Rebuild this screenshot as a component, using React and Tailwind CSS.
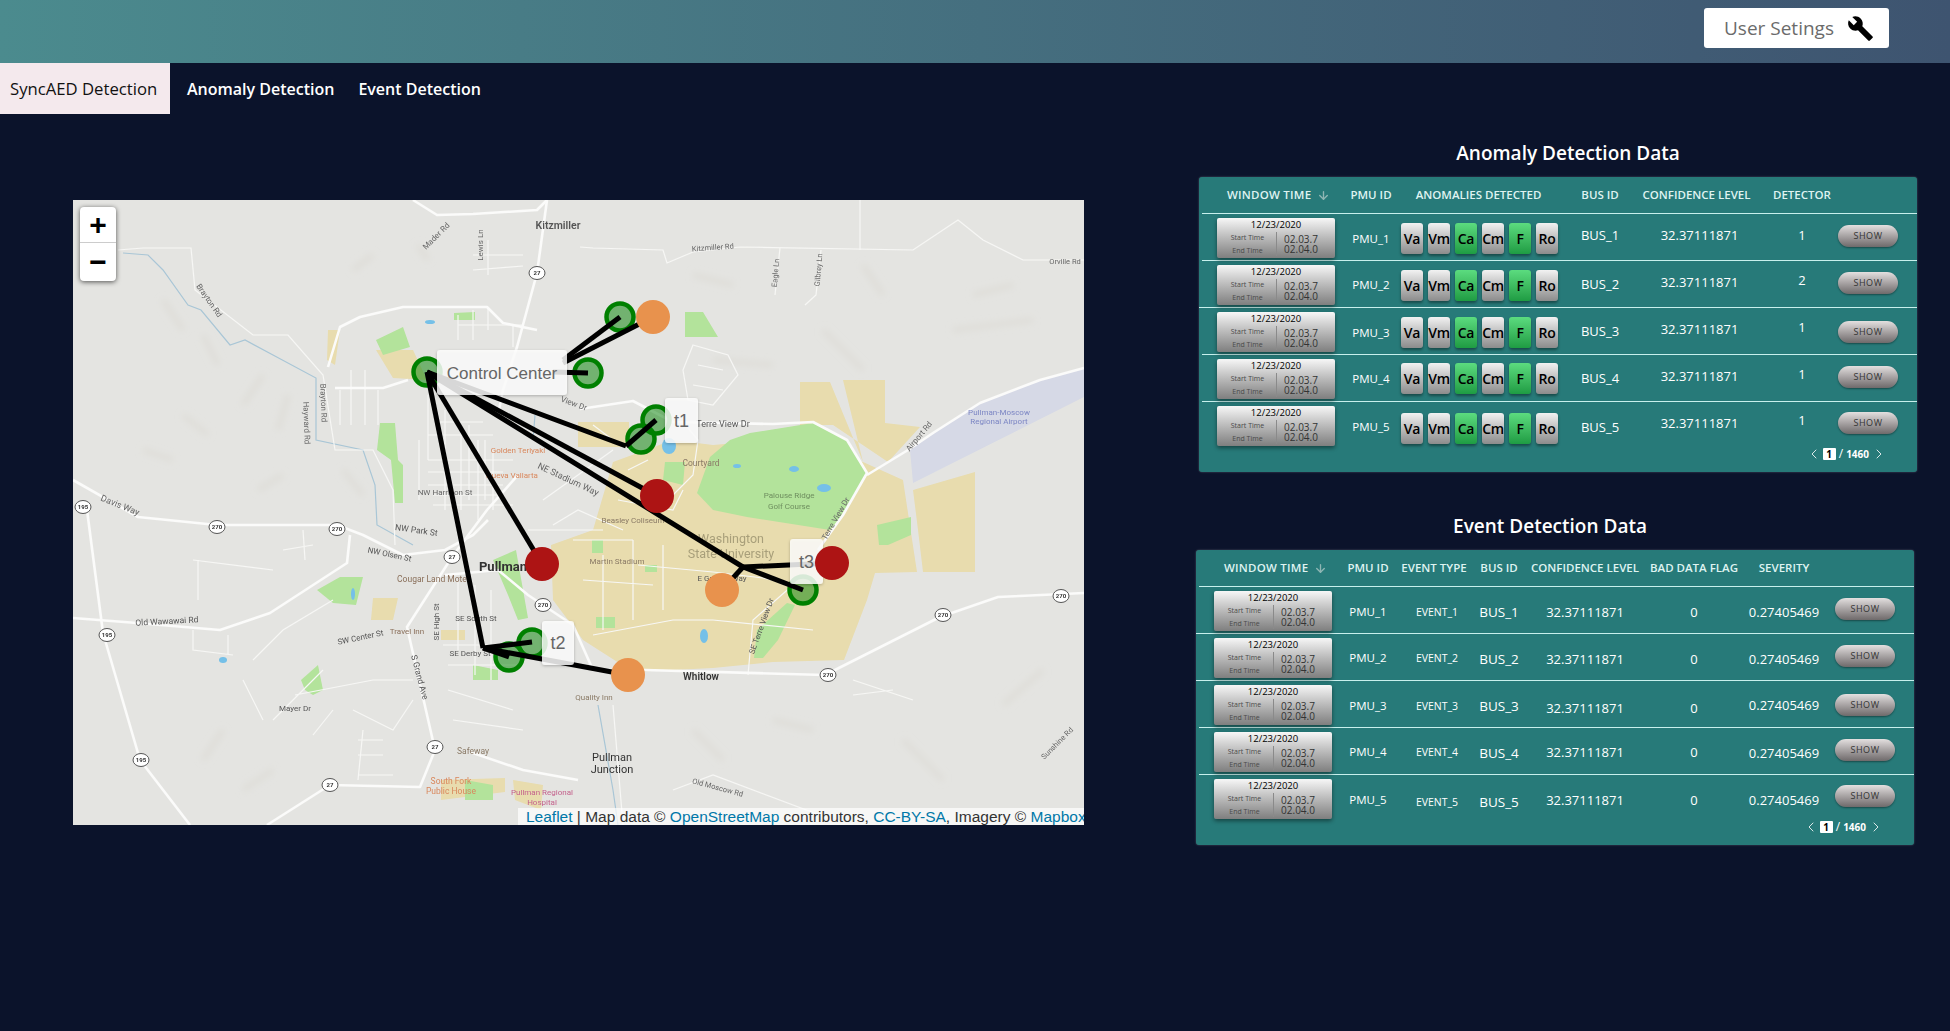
import { MdBuild } from 'react-icons/md';
import { ChevronLeft, ChevronRight, ArrowDown } from 'lucide-react';

const uiFont = "font-['Open_Sans',sans-serif]";

const anomalyRows = [
  { n: 1, det: 1, line: 'ml-[3px]', pmu: 'pt-[17px]', badge: 'pt-[9px]', bus: 'pt-[13px]', detector: 'pt-[13px]', show: 'pt-[11px]' },
  { n: 2, det: 2, line: 'ml-[3px]', pmu: 'pt-[16px]', badge: 'pt-[9px]', bus: 'pt-[15px]', detector: 'pt-[11px]', show: 'pt-[11px]' },
  { n: 3, det: 1, line: 'ml-0', pmu: 'pt-[17px]', badge: 'pt-[9px]', bus: 'pt-[15px]', detector: 'pt-[11px]', show: 'pt-[13px]' },
  { n: 4, det: 1, line: 'ml-[3px]', pmu: 'pt-[16px]', badge: 'pt-[8px]', bus: 'pt-[15px]', detector: 'pt-[11px]', show: 'pt-[11px]' },
  { n: 5, det: 1, line: 'ml-[3px]', pmu: 'pt-[17px]', badge: 'pt-[11px]', bus: 'pt-[17px]', detector: 'pt-[10px]', show: 'pt-[10px]' },
];

const eventRows = [
  { n: 1, line: 'ml-[3px]', pmu: 'pt-[17px]', event: 'pt-[17px]', bus: 'pt-[17px]', conf: 'pt-[17px]', sev: 'pt-[17px]', show: 'pt-[11px]' },
  { n: 2, line: 'ml-0', pmu: 'pt-[16px]', event: 'pt-[16px]', bus: 'pt-[17px]', conf: 'pt-[17px]', sev: 'pt-[17px]', show: 'pt-[11px]' },
  { n: 3, line: 'ml-0', pmu: 'pt-[17px]', event: 'pt-[17px]', bus: 'pt-[17px]', conf: 'pt-[19px]', sev: 'pt-[16px]', show: 'pt-[13px]' },
  { n: 4, line: 'ml-[3px]', pmu: 'pt-[16px]', event: 'pt-[16px]', bus: 'pt-[17px]', conf: 'pt-[16px]', sev: 'pt-[17px]', show: 'pt-[11px]' },
  { n: 5, line: 'ml-[3px]', pmu: 'pt-[17px]', event: 'pt-[19px]', bus: 'pt-[19px]', conf: 'pt-[17px]', sev: 'pt-[17px]', show: 'pt-[10px]' },
];

function TimeCard() {
  return (
    <div className="ml-[18px] mt-1 w-[118px] h-10 rounded-[2px] bg-gradient-to-b from-[#f7f7f7] to-[#7f7f7f] shadow-[0_2px_4px_rgba(0,0,0,0.45)] text-center">
      <div className="text-[9.5px] font-medium leading-[14px] text-black">12/23/2020</div>
      <div className="flex h-[24px]">
        <div className="w-[59px] text-[7px] leading-[12px] text-[#4a4a4a] pl-[2px]">
          <div>Start Time</div>
          <div className="pt-[1px]">End Time</div>
        </div>
        <div className="flex-1 border-l border-[#8a8a8a] text-[10px] leading-[10px] text-[#333] pr-[10px] pt-[2px]">
          <div>02.03.7</div>
          <div>02.04.0</div>
        </div>
      </div>
    </div>
  );
}

function Badge({ label, on }) {
  return (
    <div
      className={
        'w-[22px] h-[31px] rounded-[3px] flex items-center justify-center text-[14px] font-semibold tracking-[-0.02em] text-black shadow-[0_2px_3px_rgba(0,0,0,0.4)] ' +
        (on ? 'bg-gradient-to-b from-[#5bdc7f] to-[#1e9c43]' : 'bg-gradient-to-b from-[#f2f2f2] to-[#8c8c8c]')
      }
    >
      {label}
    </div>
  );
}

function ShowButton({ className }) {
  return (
    <div className={className}>
      <div className="w-[60px] h-[22px] rounded-full bg-gradient-to-b from-[#e4e0e0] to-[#6f6a6b] shadow-[0_1px_2px_rgba(0,0,0,0.4)] flex items-center justify-center text-[9px] tracking-[0.06em] text-[#333]">
        SHOW
      </div>
    </div>
  );
}

function Pager() {
  return (
    <div className="flex justify-end items-center h-3 pr-[30px] text-white text-[10px] font-bold">
      <ChevronLeft size={16} strokeWidth={1.25} />
      <span className="ml-[1px] w-[13px] h-[12px] bg-white text-black rounded-[1px] flex items-center justify-center">1</span>
      <span className="mx-[3px] font-normal text-[12px]">/</span>
      <span>1460</span>
      <ChevronRight size={16} strokeWidth={1.25} className="ml-[2px]" />
    </div>
  );
}

function HeadWindow() {
  return (
    <div className="flex items-center pl-[28px] text-[11.5px] font-semibold tracking-[0.02em] whitespace-nowrap">
      WINDOW TIME
      <ArrowDown size={13} strokeWidth={2.5} className="ml-[6px] text-[#8fb6b4]" />
    </div>
  );
}

const colsA = 'grid grid-cols-[146px_52px_170px_66px_133px_72px_79px]';
const colsE = 'grid grid-cols-[146px_52px_80px_50px_122px_96px_84px_88px]';
const headCell = 'flex items-center justify-center text-[11.5px] font-semibold whitespace-nowrap';
const cellBase = 'flex justify-center whitespace-nowrap leading-4';

function AnomalyTable() {
  return (
    <div className="w-[718px] h-[295px] rounded-[3px] bg-[#277a79] text-white shadow-[0_0_2px_rgba(255,255,255,0.3)]">
      <div className={colsA + ' h-9 text-[#dff3f1]'}>
        <HeadWindow />
        <div className={headCell}>PMU ID</div>
        <div className={headCell + ' pr-[7px]'}>ANOMALIES DETECTED</div>
        <div className={headCell}>BUS ID</div>
        <div className={headCell + ' pr-[6px]'}>CONFIDENCE LEVEL</div>
        <div className={headCell}>DETECTOR</div>
        <div />
      </div>
      {anomalyRows.map((r) => (
        <div key={r.n}>
          <div className={'h-px bg-[#c8f0ed] ' + r.line} />
          <div className={colsA + ' h-[46px]'}>
            <TimeCard />
            <div className={cellBase + ' text-[11.5px] ' + r.pmu}>PMU_{r.n}</div>
            <div className={'flex gap-[5px] pl-1 ' + r.badge}>
              <Badge label="Va" />
              <Badge label="Vm" />
              <Badge label="Ca" on />
              <Badge label="Cm" />
              <Badge label="F" on />
              <Badge label="Ro" />
            </div>
            <div className={cellBase + ' text-[13px] ' + r.bus}>BUS_{r.n}</div>
            <div className={cellBase + ' text-[13px] pt-[13px]'}>32.37111871</div>
            <div className={cellBase + ' text-[13px] ' + r.detector}>{r.det}</div>
            <ShowButton className={r.show} />
          </div>
        </div>
      ))}
      <Pager />
    </div>
  );
}

function EventTable() {
  return (
    <div className="w-[718px] h-[295px] -ml-[3px] rounded-[3px] bg-[#277a79] text-white shadow-[0_0_2px_rgba(255,255,255,0.3)]">
      <div className={colsE + ' h-9 text-[#dff3f1]'}>
        <HeadWindow />
        <div className={headCell}>PMU ID</div>
        <div className={headCell}>EVENT TYPE</div>
        <div className={headCell}>BUS ID</div>
        <div className={headCell}>CONFIDENCE LEVEL</div>
        <div className={headCell}>BAD DATA FLAG</div>
        <div className={headCell}>SEVERITY</div>
        <div />
      </div>
      {eventRows.map((r) => (
        <div key={r.n}>
          <div className={'h-px bg-[#c8f0ed] ' + r.line} />
          <div className={colsE + ' h-[46px]'}>
            <TimeCard />
            <div className={cellBase + ' text-[11.5px] ' + r.pmu}>PMU_{r.n}</div>
            <div className={cellBase + ' text-[10.5px] pl-[6px] ' + r.event}>EVENT_{r.n}</div>
            <div className={cellBase + ' text-[13.5px] ' + r.bus}>BUS_{r.n}</div>
            <div className={cellBase + ' text-[13px] ' + r.conf}>32.37111871</div>
            <div className={cellBase + ' text-[13px] ' + r.conf}>0</div>
            <div className={cellBase + ' text-[13px] ' + r.sev}>0.27405469</div>
            <ShowButton className={'pl-[9px] ' + r.show} />
          </div>
        </div>
      ))}
      <Pager />
    </div>
  );
}

/* map drawing data, coordinates are local to the 1011x625 map */
const tan = [
  '727,182 757,182 790,262 770,180 812,180 812,223 847,227 815,262 760,225 727,225',
  '505,222 556,222 556,247 505,247',
  '540,262 600,240 640,245 700,240 790,262 830,280 844,372 802,373 794,400 771,460 700,462 640,468 560,472 510,440 480,400 478,345 520,330',
  '840,290 902,272 902,372 850,372 845,330',
  '303,150 340,150 354,180 320,178',
  '255,130 267,130 262,165 254,160',
  '368,580 432,578 432,592 368,600',
  '440,580 470,585 468,610 442,600',
  '368,430 392,430 392,440 368,440',
  '300,398 325,398 320,420 298,420',
];
const green = [
  '303,140 330,127 337,147 310,155',
  '307,223 322,223 325,260 330,265 330,303 322,303 318,260 304,250',
  '381,113 402,112 402,120 381,120',
  '244,390 267,377 290,377 283,405 260,403',
  '228,480 245,465 250,490 240,495 232,490',
  '677,233 740,223 774,240 794,273 774,310 757,330 674,317 640,310 624,293 637,257 657,240',
  '612,112 630,112 645,137 612,137',
  '592,262 612,262 610,285 590,280',
  '400,465 425,470 425,480 400,480',
  '420,360 443,350 455,418 445,420 435,395',
  '572,365 584,365 584,372 572,372',
  '714,403 722,405 705,440 690,458 681,458 684,430',
  '523,417 542,417 542,428 523,428',
  '519,340 530,340 530,353 519,353',
  '804,325 838,317 838,335 815,345 806,345',
  '392,580 420,585 420,600 392,600',
];
const roads = [
  'M340 0 L364 15 L400 14 L464 10 L474 0',
  'M474 0 L464 73 L444 147 L430 190 L425 215',
  'M0 280 L65 317 L144 325 L264 325 L290 335 L330 355 L372 350 L400 335 L415 320',
  'M372 375 L425 370 L455 395 L500 425 L520 470 L572 470 L752 475 L867 417 L925 397 L1011 393',
  'M14 310 L30 433 L67 560 L117 625',
  'M0 418 L64 423 L147 430 L197 413 L274 363 L277 335',
  'M194 625 L257 585 L347 587 L362 550 L334 427 L379 357 L414 310 L445 275',
  'M255 167 L267 127 L287 117 L330 107 L414 107 L430 123 L464 130',
  'M262 188 L310 188 L335 180',
  'M397 552 L450 570 L505 580',
  'M507 209 L560 201 L600 222 L700 224 L740 222 L774 240 L794 273 L770 315 L745 350',
  'M794 275 L835 250 L860 233 L907 203 L967 180 L1011 168',
];
const thin = [
  'M507 47 L520 48 L590 50 L594 63 L620 52 L667 47 L840 50 L885 20 L910 40 L950 60 L1011 60',
  'M787 0 L787 50',
  'M707 48 L702 95',
  'M748 50 L743 95 L732 105',
  'M45 50 L70 48 L118 48 L122 90 L180 135 L215 135 L250 175 L262 250 L300 250 L320 290 L322 345',
  'M267 190 L267 225 M278 170 L278 225 M292 170 L292 225 M305 190 L305 225',
  'M355 195 L355 260 M372 210 L372 310 M388 225 L388 310 M405 240 L405 320 M420 250 L420 310 M346 240 L346 300 M396 225 L396 300 M412 240 L412 300',
  'M355 235 L420 235 M355 260 L440 260 M355 285 L430 285 M360 305 L440 305 M365 222 L410 222 M355 272 L430 272 M360 295 L430 295',
  'M440 125 L440 147 M415 107 L415 130 M400 110 L400 140 M385 115 L385 140 M385 125 L450 125',
  'M415 40 L415 75 M400 55 L450 55 M400 70 L450 66',
  'M620 145 L655 155 L665 175 L640 205 L615 200 L610 170 Z M625 165 L650 170 M620 185 L650 190',
  'M480 325 L505 310 L550 330 M455 330 L530 330 M500 340 L560 340 M470 300 L540 250',
  'M385 380 L385 450 M402 385 L402 475 M418 390 L418 480 M370 445 L450 445 M375 465 L445 465 M375 490 L440 510 M380 520 L450 530',
  'M180 460 L210 430 L260 400 M170 480 L190 520 M200 520 L250 470 M222 495 L300 480 L340 480',
  'M120 430 L120 450 L160 455 M155 435 L155 455 M240 535 L260 510 M280 510 L320 530 L340 500',
  'M120 360 L200 370 M125 360 L125 400 M210 350 L240 345 M230 330 L232 360',
  'M290 530 L285 580 M285 540 L310 540 M285 555 L310 555 M285 575 L320 575',
  'M540 240 L520 225 M555 270 L575 260 M545 300 L600 310 L610 290',
  'M510 380 L580 385 M530 355 L530 430 M560 340 L560 420 M590 345 L590 410',
  'M540 505 L550 625 M600 590 L640 575 L760 620',
  'M840 500 L780 480 M780 495 L820 490',
  'M610 222 L625 240 L620 275 L590 305',
  'M520 435 L600 420 L640 420 L740 430',
  'M565 365 L640 372 L690 378 L720 385',
  'M675 475 L680 420 L720 385',
];
const rivers = [
  'M50 53 L75 55 L90 70 L115 105 L128 110 L157 145 L172 140 L200 155 L243 178 L243 240 L290 250 L302 285 L304 325 L340 345',
  'M525 505 L540 590 L545 625',
  'M460 240 L462 215',
];
const terrain = [
  'M90 100 L110 130', 'M130 135 L145 165', 'M190 175 L170 205', 'M215 195 L205 230', 'M110 215 L135 235', 'M280 70 L300 55',
  'M345 45 L355 60', 'M70 250 L100 260', 'M185 290 L210 275', 'M270 270 L290 295', 'M620 75 L660 85', 'M790 65 L810 95', 'M900 95 L940 85',
  'M640 160 L700 165', 'M750 130 L790 170', 'M880 130 L960 120', 'M930 505 L970 470', 'M830 540 L870 580', 'M700 520 L740 530',
  'M130 560 L150 530', 'M170 590 L200 570', 'M620 530 L650 560',
];
const water = [
  [357, 122, 5, 2], [664, 266, 4, 2], [721, 269, 5, 3], [751, 288, 7, 4], [150, 460, 4, 3], [280, 394, 2, 6], [631, 436, 4, 7], [596, 246, 7, 8],
];
const shields = [
  [144, 327, '270'], [264, 329, '270'], [464, 73, '27'], [379, 357, '27'], [470, 405, '270'], [362, 547, '27'], [257, 585, '27'],
  [34, 435, '195'], [68, 560, '195'], [10, 307, '195'], [755, 475, '270'], [870, 415, '270'], [988, 396, '270'],
];
const labels = [
  [485, 29, 'Kitzmiller', 10.5, '#555', 0, 600],
  [365, 38, 'Mader Rd', 8, '#666', -45],
  [410, 45, 'Lewis Ln', 8, '#666', -90],
  [134, 102, 'Brayton Rd', 8, '#666', 55],
  [248, 203, 'Brayton Rd', 8, '#666', 88],
  [231, 223, 'Hayward Rd', 8, '#666', 88],
  [46, 308, 'Davis Way', 9, '#666', 22],
  [372, 295, 'NW Harrison St', 8, '#666'],
  [445, 253, 'Golden Teriyaki', 8, '#d9875c'],
  [439, 278, 'Nueva Vallarta', 8, '#d9875c'],
  [494, 282, 'NE Stadium Way', 9, '#666', 25],
  [500, 206, 'View Dr', 8, '#666', 20],
  [640, 50, 'Kitzmiller Rd', 7.5, '#666', -4],
  [705, 73, 'Eagle Ln', 7.5, '#666', -85],
  [748, 70, 'Gilbrey Ln', 7.5, '#666', -85],
  [992, 64, 'Orville Rd', 7.5, '#666'],
  [650, 227, 'Terre View Dr', 9, '#555'],
  [628, 266, 'Courtyard', 8.5, '#8a7a66'],
  [716, 298, 'Palouse Ridge', 8, '#6f8f5f'],
  [716, 309, 'Golf Course', 8, '#6f8f5f'],
  [926, 215, 'Pullman-Moscow', 8, '#7c86c4'],
  [926, 224, 'Regional Airport', 8, '#7c86c4'],
  [848, 238, 'Airport Rd', 8, '#666', -50],
  [765, 320, 'Terre View Dr', 8, '#666', -60],
  [560, 323, 'Beasley Coliseum', 8, '#8a7a66'],
  [658, 343, 'Washington', 12.5, '#a89f7a'],
  [658, 358, 'State University', 12.5, '#a89f7a'],
  [544, 364, 'Martin Stadium', 8, '#8a7a66'],
  [430, 371, 'Pullman', 13, '#333', 0, 700],
  [343, 333, 'NW Park St', 8.5, '#555', 8],
  [316, 357, 'NW Olsen St', 8, '#555', 12],
  [360, 382, 'Cougar Land Motel', 8.5, '#8a6f5a'],
  [334, 434, 'Travel Inn', 8, '#8a6f5a'],
  [288, 440, 'SW Center St', 8, '#555', -12],
  [366, 422, 'SE High St', 8, '#555', -90],
  [403, 421, 'SE South St', 8, '#555'],
  [397, 456, 'SE Derby St', 8, '#555'],
  [344, 478, 'S Grand Ave', 8.5, '#555', 75],
  [94, 424, 'Old Wawawai Rd', 8.5, '#555', -3],
  [222, 511, 'Mayer Dr', 8, '#555'],
  [400, 554, 'Safeway', 8.5, '#8a7a66'],
  [378, 584, 'South Fork', 8.5, '#d9875c'],
  [378, 594, 'Public House', 8.5, '#d9875c'],
  [469, 595, 'Pullman Regional', 8, '#c4628c'],
  [469, 605, 'Hospital', 8, '#c4628c'],
  [628, 480, 'Whitlow', 10, '#333', 0, 600],
  [521, 500, 'Quality Inn', 8, '#8a7a66'],
  [539, 561, 'Pullman', 11, '#333'],
  [539, 573, 'Junction', 11, '#333'],
  [644, 590, 'Old Moscow Rd', 7.5, '#666', 15],
  [986, 545, 'Sunshine Rd', 7.5, '#666', -45],
  [691, 427, 'SE Terre View Dr', 8, '#555', -70],
  [649, 381, 'E Grimes Way', 8, '#555'],
];

const greens = [[354, 172], [547, 117], [515, 173], [583, 220], [568, 239], [459, 443], [436, 457], [730, 390]];
const links = [
  [354, 172, 553, 246], [553, 246, 583, 220], [354, 172, 584, 296], [354, 172, 670, 367], [670, 367, 730, 390], [670, 367, 759, 363],
  [670, 367, 649, 390], [354, 172, 469, 364], [354, 172, 410, 448], [410, 448, 459, 442], [410, 448, 436, 457], [410, 448, 555, 475],
  [490, 160, 547, 117], [490, 163, 580, 117], [480, 172, 515, 173],
];

function MapLabel({ x, y, w, h, text, size }) {
  return (
    <g>
      <rect x={x} y={y} width={w} height={h} rx="3" fill="#fff" fillOpacity="0.82" filter="url(#labelShadow)" />
      <text x={x + w / 2} y={y + h / 2 + size * 0.36} fontSize={size} fill="#666" textAnchor="middle" fontFamily="'Liberation Sans',sans-serif">
        {text}
      </text>
    </g>
  );
}

function PmuMap() {
  return (
    <div className="relative w-[1011px] h-[625px] overflow-hidden bg-[#e4e4e1]">
      <svg viewBox="0 0 1011 625" className="block w-full h-full">
        <defs>
          <filter id="soft">
            <feGaussianBlur stdDeviation="0.55" />
          </filter>
          <filter id="terrainBlur">
            <feGaussianBlur stdDeviation="3" />
          </filter>
          <filter id="labelShadow" x="-20%" y="-20%" width="140%" height="140%">
            <feDropShadow dx="0" dy="1" stdDeviation="1.5" floodColor="#000" floodOpacity="0.3" />
          </filter>
        </defs>
        <g filter="url(#terrainBlur)">
          {terrain.map((d, i) => <path key={i} d={d} fill="none" stroke="#dfded9" strokeWidth="6" />)}
        </g>
        <g filter="url(#soft)">
          <polygon points="837,250 860,233 907,203 967,180 1011,168 1011,197 840,283" fill="#d6d9e6" />
          {tan.map((p, i) => <polygon key={i} points={p} fill="#e8dcae" />)}
          {green.map((p, i) => <polygon key={i} points={p} fill="#b3e39b" />)}
          {rivers.map((d, i) => <path key={i} d={d} fill="none" stroke="#a9c6d6" strokeWidth="1.2" />)}
          {thin.map((d, i) => <path key={i} d={d} fill="none" stroke="#f7f7f5" strokeWidth="1.2" />)}
          {roads.map((d, i) => <path key={i} d={d} fill="none" stroke="#fbfbfa" strokeWidth="2.6" strokeLinejoin="round" />)}
          {water.map(([cx, cy, rx, ry], i) => <ellipse key={i} cx={cx} cy={cy} rx={rx} ry={ry} fill="#74c0e8" />)}
          {shields.map(([x, y, t], i) => (
            <g key={i}>
              <ellipse cx={x} cy={y} rx="8" ry="6.5" fill="#fff" stroke="#555" strokeWidth="1" />
              <text x={x} y={y + 2.2} fontSize="6" textAnchor="middle" fill="#333" fontWeight="700" fontFamily="'Roboto',sans-serif">{t}</text>
            </g>
          ))}
          {labels.map(([x, y, t, size, fill, rot, weight], i) => (
            <text
              key={i}
              x={x}
              y={y}
              fontSize={size}
              fill={fill}
              fontWeight={weight || 400}
              textAnchor="middle"
              fontFamily="'Roboto',sans-serif"
              transform={rot ? `rotate(${rot} ${x} ${y})` : undefined}
            >
              {t}
            </text>
          ))}
        </g>
        {greens.map(([x, y], i) => (
          <circle key={i} cx={x} cy={y} r="13.5" fill="#008000" fillOpacity="0.5" stroke="#008000" strokeWidth="4.5" />
        ))}
        {links.map(([a, b, c, d], i) => (
          <line key={i} x1={a} y1={b} x2={c} y2={d} stroke="#000" strokeWidth="5" />
        ))}
        <MapLabel x={364} y={150} w={130} h={45} text="Control Center" size={17} />
        <MapLabel x={592} y={198} w={33} h={45} text="t1" size={18} />
        <MapLabel x={469} y={421} w={32} h={44} text="t2" size={18} />
        <MapLabel x={717} y={339} w={33} h={45} text="t3" size={18} />
        {[[580, 117, '#e8924d'], [555, 475, '#e8924d'], [649, 390, '#e8924d'], [584, 296, '#ad1414'], [469, 364, '#ad1414'], [759, 363, '#ad1414']].map(([x, y, c], i) => (
          <circle key={i} cx={x} cy={y} r="17" fill={c} />
        ))}
      </svg>
      <div className="absolute left-[7px] top-[7px] w-9 h-[74px] rounded-[4px] bg-white shadow-[0_1px_5px_rgba(0,0,0,0.65)] text-black font-['Liberation_Sans',sans-serif] font-bold text-[30px] leading-none">
        <div className="h-9 flex items-center justify-center border-b border-[#ccc]">+</div>
        <div className="h-[37px] flex items-center justify-center">−</div>
      </div>
      <div className="absolute left-[445px] right-0 bottom-0 h-[17px] pl-2 bg-white/70 whitespace-nowrap overflow-hidden font-['Liberation_Sans',sans-serif] text-[15.5px] leading-[18px] text-[#333]">
        <span className="text-[#0078a8]">Leaflet</span> | Map data © <span className="text-[#0078a8]">OpenStreetMap</span> contributors, <span className="text-[#0078a8]">CC-BY-SA</span>, Imagery © <span className="text-[#0078a8]">Mapbox</span>
      </div>
    </div>
  );
}

export default function App() {
  return (
    <div className={'min-h-screen bg-[#0b132b] ' + uiFont}>
      <header className="h-[63px] bg-gradient-to-r from-[#4b8b8e] to-[#3e5470] flex justify-end items-start pt-2 pr-[61px]">
        <button className="w-[185px] h-10 rounded-[3px] bg-white flex items-center pl-5 pt-[1px] text-[#6b6b6b] text-[19px] font-medium">
          User Setings
          <MdBuild size={27} className="ml-[13px] text-black" />
        </button>
      </header>

      <nav className="h-[51px] flex text-[16px] font-semibold text-white">
        <div className="w-[170px] flex items-center pl-[10px] pt-[1px] bg-[#f4e9ed] text-[#111] text-[16.7px] font-normal">SyncAED Detection</div>
        <div className="flex items-center pl-[17px] pt-[1px]">Anomaly Detection</div>
        <div className="flex items-center pl-6 pt-[1px]">Event Detection</div>
      </nav>

      <main className="flex">
        <div className="pl-[73px] pt-[86px]">
          <PmuMap />
        </div>
        <div className="ml-[115px] pt-[25px] flex flex-col w-[718px]">
          <h2 className="h-7 mb-[10px] pl-5 flex items-center justify-center text-white text-[19px] font-semibold">Anomaly Detection Data</h2>
          <AnomalyTable />
          <h2 className="h-7 mt-10 mb-[10px] pr-4 flex items-center justify-center text-white text-[19px] font-semibold">Event Detection Data</h2>
          <EventTable />
        </div>
      </main>
    </div>
  );
}
